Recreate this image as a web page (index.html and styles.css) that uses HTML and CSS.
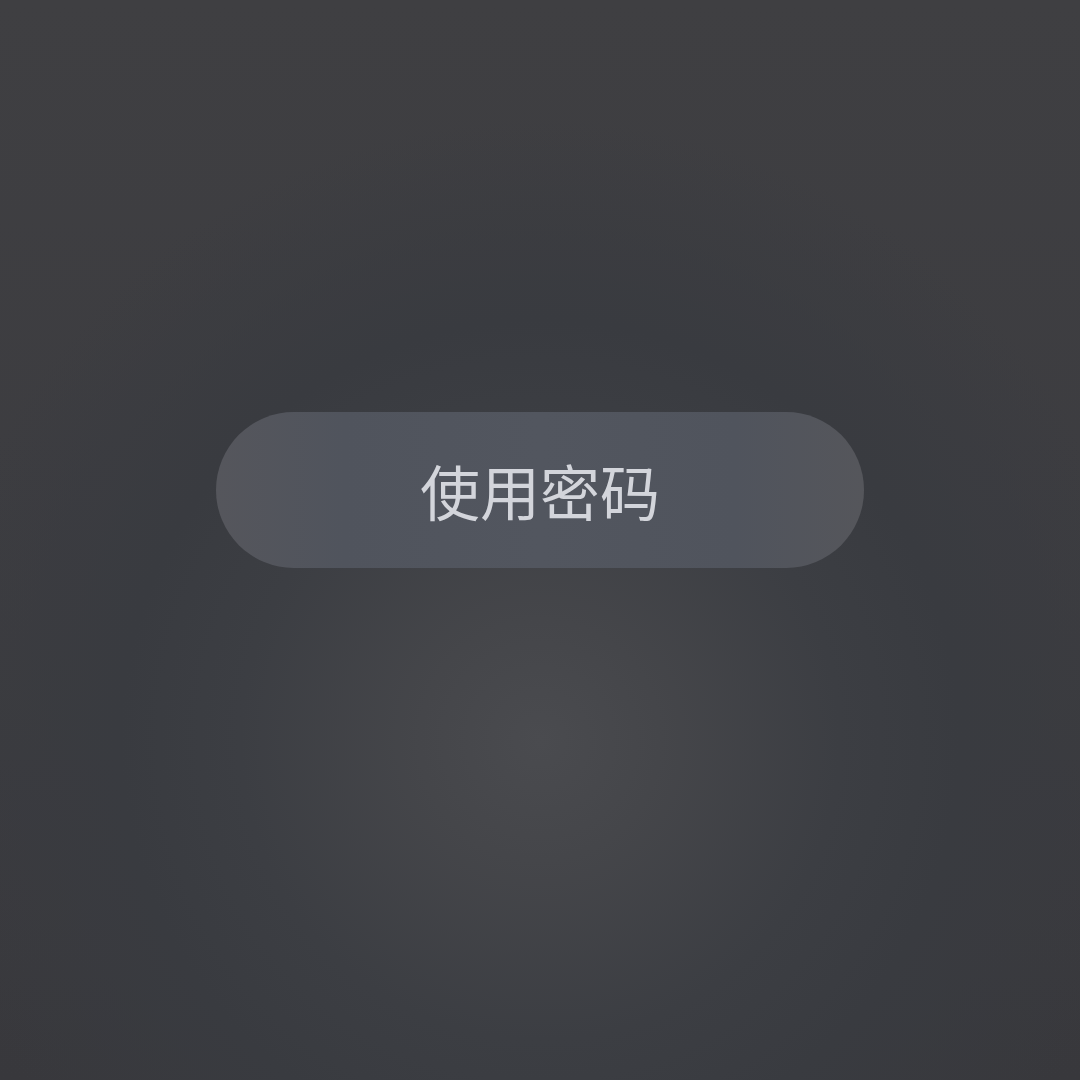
FILE: index.html
```html
<!DOCTYPE html>
<html lang="zh-CN">
<head>
<meta charset="utf-8">
<link rel="stylesheet" href="styles.css">
</head>
<body>
<main class="screen">
  <button class="pill">使用密码</button>
</main>
</body>
</html>
```
FILE: styles.css
```css
html, body {
  margin: 0;
  padding: 0;
}
.screen {
  width: 1080px;
  height: 1080px;
  box-sizing: border-box;
  padding-top: 412px;
  display: flex;
  flex-direction: column;
  align-items: center;
  background:
    radial-gradient(circle at 540px 740px, #4a4b4f 0px, #45464a 120px, #3c3e43 300px, #393b40 420px, rgba(60,60,64,0) 620px),
    linear-gradient(#3f3f42, #3c3c40 60%, #38383c);
}
.pill {
  width: 648px;
  height: 156px;
  border: none;
  border-radius: 78px;
  background: linear-gradient(90deg, #55565c 0%, #50545d 20%, #52565f 50%, #50545d 80%, #55565b 100%);
  color: #d3d5db;
  font-family: "Noto Sans CJK SC", "Noto Sans", sans-serif;
  font-size: 60px;
  font-weight: 400;
  letter-spacing: 0;
  line-height: 1;
  padding: 0;
  display: flex;
  align-items: center;
  justify-content: center;
}
```
